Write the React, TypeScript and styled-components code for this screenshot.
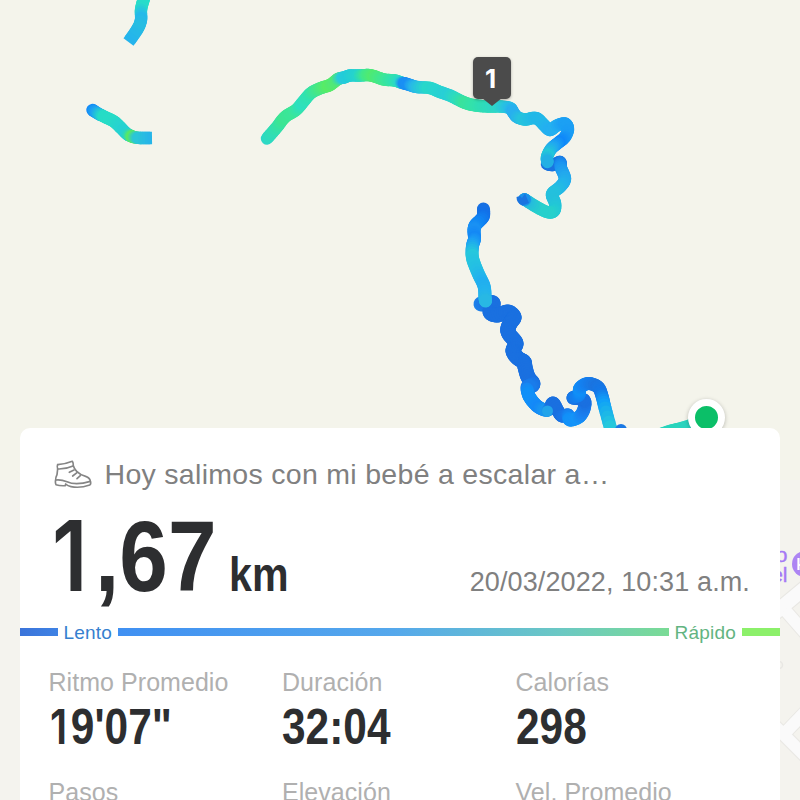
import React from "react";
import styled, { createGlobalStyle } from "styled-components";

type Point = [number, number, string?];

const startTail: Point[] = [[655, 436, "#28d4bc"], [670, 431], [682, 428], [700, 422, "#2cd2c0"]];

const northTrack: Point[] = [
  [147, -10, "#26dfc8"], [143.5, 0], [141, 10, "#29dbcb"], [141, 20, "#25b9ea"], [137.5, 29, "#27bde2"], [128.5, 42, "#25b4ec"],
];

const westTrack: Point[] = [
  [92.5, 110, "#0f82fb"], [98, 113.5, "#20a6ee"], [105, 117, "#26dcc6"], [114, 121.5, "#27dcc6"], [120, 127, "#27d6cc"],
  [127, 134, "#26d0d4"], [130, 135.5, "#30d8b8"], [133.5, 137, "#5bea5f"], [140, 138, "#2ac6d8"], [152, 138, "#26b5e8"],
];

const mainTrack: Point[] = [
  [267, 138.5, "#2cd6cc"], [277, 127, "#32dfb0"], [285, 117, "#3ce592"], [296, 110, "#3be69a"], [303, 102, "#2ee0c0"],
  [311, 93, "#30e2b0"], [321, 88, "#45e788"], [330, 85, "#58ec66"], [338, 79, "#4fe87a"], [344, 77.5, "#28cbdc"],
  [350, 75.5, "#22ccd8"], [360, 75.5, "#26d4cc"], [368, 75, "#40e88c"], [375, 76.5, "#50ea70"], [384, 79.5, "#42e88c"],
  [395, 80.5, "#32e2ac"], [401, 82.5, "#2ad8c8"], [405, 83.5, "#1a8ff2"], [410, 85, "#1a90f5"], [417, 87, "#28b8e8"],
  [430, 88, "#28d8ca"], [440, 92, "#28d4d0"], [450, 95.5, "#28cfd6"], [459, 100, "#2edcbc"], [467, 103.5, "#3ae29c"],
  [476, 105.5, "#34e2a8"], [488, 106.5, "#2edcb8"], [500, 106.5, "#2ed6c8"], [510, 108, "#28c0e4"], [513, 112, "#28b0ee"],
  [517, 117, "#28b0ee"], [525, 119.5, "#26c4dc"], [533, 118, "#24bce4"], [538, 119, "#22b8e8"], [544, 125], [550, 130, "#24b0f0"],
  [557, 125.5], [565, 123.5, "#1ca0f4"], [568, 129], [565, 137, "#1a9cf5"], [558, 143, "#0f88fa"], [551, 149, "#20a8f0"],
  [547, 157, "#24c8d8"], [547.5, 162, "#22b0e4"],
];

const descentTrack: Point[] = [
  [547, 164, "#1a74e0"], [553, 165], [560, 162, "#1a74e0"], [561, 168, "#1a90f0"], [565, 179, "#22a8ee"], [560, 187, "#22b4ea"],
  [552, 194, "#24c0de"], [555, 203, "#24c0dc"], [554, 211, "#22c8d6"], [547, 212, "#26d0cc"], [535, 206, "#26d0cc"],
  [525.5, 200, "#26bcdc"], [524.5, 199.5, "#1a90ea"],
];

const valleyTrack: Point[] = [
  [483.5, 209, "#1a70e0"], [483, 217, "#1270e8"], [475.5, 225, "#0f86f4"], [474, 231, "#1a92f4"], [474.5, 239, "#1488f5"],
  [472.5, 246, "#1ca0f4"], [472.5, 258, "#26c8dc"], [478, 273, "#24bfe4"], [484, 286, "#20aef0"], [485, 297, "#24b4ec"], [485.5, 301, "#28b8e4"],
];

const slopeTrack: Point[] = [
  [481, 304, "#1e84ec"], [493, 303, "#1a70e0"], [490, 312], [497, 315], [508, 312], [514, 317], [511, 322], [508, 328],
  [509, 334], [516, 343], [513, 350], [515, 355], [519, 359], [524, 362], [525, 367], [528, 377], [533, 384],
  [528, 387, "#1a7cea"],
];

const southTrack: Point[] = [
  [527, 389, "#1a84f0"], [529, 396, "#0f90f8"], [534, 403, "#1290f8"], [540, 408, "#1488f8"], [548, 410, "#1a98f0"],
  [553, 403, "#1a70e0"], [558, 411, "#1a70e0"], [562, 416], [568, 415, "#1a78ea"], [570, 420, "#1290f8"], [579, 417, "#1494f8"],
  [584, 409, "#1a80f0"], [584, 400, "#1a70e0"], [573, 398, "#1a70e0"], [579, 395, "#1280f0"], [580, 388, "#1090f8"],
  [588, 383.5, "#1480f0"], [598, 387, "#1a74e0"], [602, 396, "#1478e8"], [605, 408, "#10a0f8"], [611, 430, "#26c8dc"],
];

const stats = [
  { label: "Ritmo Promedio", value: "19'07\"" },
  { label: "Duración", value: "32:04" },
  { label: "Calorías", value: "298" },
  { label: "Pasos", value: "" },
  { label: "Elevación", value: "" },
  { label: "Vel. Promedio", value: "" },
];

const toRgb = (hex: string) => [1, 3, 5].map(i => parseInt(hex.slice(i, i + 2), 16));

const mix = (a: string, b: string, t: number) => {
  const to = toRgb(b);
  return `rgb(${toRgb(a).map((c, i) => Math.round(c + (to[i] - c) * t)).join(",")})`;
};

const spline = (a: number, b: number, c: number, d: number, t: number) =>
  0.5 * (2 * b + (c - a) * t + (2 * a - 5 * b + 4 * c - d) * t * t + (3 * b - a - 3 * c + d) * t * t * t);

const STEPS = 5;

// splits the track in short pieces, so that the colour follows the pace
const Track = ({ points, buttEnd, width = 12.4 }: { points: Point[]; buttEnd?: boolean; width?: number }) => {
  const colors: string[] = [];
  points.forEach((p, i) => colors.push(p[2] || colors[i - 1]));
  const at = (i: number) => points[Math.max(0, Math.min(points.length - 1, i))];
  const dots: { x: number; y: number; color: string }[] = [];

  for (let i = 0; i < points.length - 1; i++) {
    for (let s = 0; s <= STEPS; s++) {
      if (s === STEPS && i < points.length - 2) continue;
      const t = s / STEPS;
      dots.push({
        x: spline(at(i - 1)[0], at(i)[0], at(i + 1)[0], at(i + 2)[0], t),
        y: spline(at(i - 1)[1], at(i)[1], at(i + 1)[1], at(i + 2)[1], t),
        color: mix(colors[i], colors[i + 1], t),
      });
    }
  }

  return (
    <g strokeWidth={width}>
      {dots.slice(1).map((dot, idx) => {
        const butt = buttEnd && idx > dots.length - 7;
        const from = dots[butt ? idx - 1 : idx];
        return (
          <line
            key={idx}
            x1={from.x}
            y1={from.y}
            x2={dot.x}
            y2={dot.y}
            stroke={dot.color}
            strokeLinecap={butt ? "butt" : "round"}
          />
        );
      })}
    </g>
  );
};

const RouteMap = () => (
  <MapCanvas viewBox="0 0 800 800">
    <rect width="800" height="800" fill="#f4f4eb" />
    <rect y="480" width="800" height="320" fill="#f4f3ee" />
    <g fill="none" strokeLinejoin="round">
      <g stroke="#e8e7e3">
        <path d="M770 617 L806 587" strokeWidth="16" />
        <path d="M785 610 L806 634" strokeWidth="14" />
        <path d="M784 734 L806 711" strokeWidth="14" />
        <path d="M770 721 L806 757" strokeWidth="14" />
        <circle cx="779" cy="665" r="3.5" strokeWidth="1.5" />
      </g>
      <g stroke="#fafafa">
        <path d="M770 617 L806 587" strokeWidth="14" />
        <path d="M785 610 L806 634" strokeWidth="12" />
        <path d="M784 734 L806 711" strokeWidth="12" />
        <path d="M770 721 L806 757" strokeWidth="12" />
      </g>
    </g>
    <PlaceText x="787.5" y="562">o</PlaceText>
    <PlaceText x="787.5" y="582">el</PlaceText>
    <circle cx="805" cy="564" r="13" fill="#ad85f3" />
    <path d="M798.5 558 V570 M798.5 565 H808 M800 561 h3" stroke="#fff" strokeWidth="2.2" fill="none" />
    <Track points={startTail} />
    <Track points={northTrack} buttEnd />
    <Track points={westTrack} buttEnd />
    <Track points={descentTrack} />
    <path d="M516.5 197 L520 196 L522 198 L525 193.5 L529 203 L522 205.5 Q516.5 203 516.5 197Z" fill="#1a74e0" />
    <Track points={mainTrack} />
    <Track points={slopeTrack} width={15} />
    <Track points={valleyTrack} width={13} />
    <Track points={southTrack} width={13} />
    <circle cx="547.5" cy="411" r="5.5" fill="#22a4ea" />
    <circle cx="621" cy="430" r="6" fill="#1a78e4" />
  </MapCanvas>
);

const BootIcon = () => (
  <svg width="38" height="29" viewBox="-3 -3 114 87" fill="none" stroke="#858585" strokeWidth="5" strokeLinecap="round" strokeLinejoin="round">
    <path d="M8 11 Q30 10 52 1 Q55 5 55 14 Q58 24 65 31 Q76 42 92 46 Q105 50 106 61" />
    <path d="M8 11 Q5 15 8 24 L6 41 Q1 51 2 57" />
    <path d="M8 24 Q32 25 54 15" />
    <path d="M2 57 Q18 55 36 62 Q62 74 106 61 Q109 69 104 72 Q76 82 48 77 Q38 75 32 69 L31 74 Q14 75 3 71 Q0 65 2 57Z" />
    <path d="M43 34 L57 27 M53 45 L66 35 M66 53 L76 44" />
  </svg>
);

const Figures = ({ value }: { value: string }) => (
  <>{value.split("").map((char, idx) => (char === "1" ? <One key={idx}>1</One> : char))}</>
);

const App = () => {
  return (
    <Screen>
      <GlobalStyle />
      <RouteMap />
      <StartDot />
      <KmMarker>1</KmMarker>
      <Card>
        <Title><BootIcon /><span>Hoy salimos con mi bebé a escalar a…</span></Title>
        <Summary>
          <Distance><Figures value="1,67" /></Distance>
          <Unit>km</Unit>
          <DateText>20/03/2022, 10:31 a.m.</DateText>
        </Summary>
        <Pace>
          <PaceBar $width={38} $fill="linear-gradient(90deg, #3b74da, #3f82e4)" />
          <PaceLabel $color="#3580cf">Lento</PaceLabel>
          <PaceBar $fill="linear-gradient(90deg, #4090f2, #55a8ec 50%, #6bc8c4 80%, #7adb95)" />
          <PaceLabel $color="#62b481">Rápido</PaceLabel>
          <PaceBar $width={38} $fill="#8cf06a" />
        </Pace>
        <Stats>
          {stats.map(item => (
            <div key={item.label}>
              <StatLabel>{item.label}</StatLabel>
              <StatValue><Figures value={item.value} /></StatValue>
            </div>
          ))}
        </Stats>
      </Card>
    </Screen>
  );
};

const GlobalStyle = createGlobalStyle`
  body {
    margin: 0;
    overflow: hidden;
    font-family: "Liberation Sans", Arial, sans-serif;
  }
`;

const Screen = styled.div`
  position: relative;
  box-sizing: border-box;
  width: 800px;
  height: 800px;
  padding: 428px 20px 0;
  overflow: hidden;
`;

const MapCanvas = styled.svg`
  position: absolute;
  top: 0;
  left: 0;
  width: 800px;
  height: 800px;
`;

const PlaceText = styled.text`
  font-size: 21px;
  fill: #a679f5;
  stroke: #a679f5;
  stroke-width: 0.4px;
  text-anchor: end;
`;

const StartDot = styled.div`
  position: absolute;
  top: 399px;
  left: 688px;
  box-sizing: border-box;
  width: 37px;
  height: 37px;
  border: 7px solid #fff;
  border-radius: 50%;
  background: #0bbf68;
  box-shadow: 0 1px 4px rgba(0, 0, 0, 0.25);
`;

const KmMarker = styled.div`
  position: absolute;
  top: 57px;
  left: 473px;
  width: 38px;
  height: 42px;
  border-radius: 5px;
  background: #4b4b4b;
  box-shadow: 0 1px 3px rgba(0, 0, 0, 0.3);
  color: #fff;
  font: 700 26px/43px Inter, sans-serif;
  text-align: center;
  text-indent: -3px;

  &::after {
    content: "";
    position: absolute;
    top: 41px;
    left: 9px;
    border: 10px solid transparent;
    border-top: 8px solid #4b4b4b;
    border-bottom: 0;
  }
`;

const Card = styled.div`
  position: relative;
  height: 400px;
  padding-top: 28px;
  border-radius: 10px 10px 0 0;
  background: #fff;
`;

const Title = styled.div`
  display: flex;
  align-items: center;
  gap: 12.5px;
  height: 36px;
  padding-left: 34px;
  color: #808080;
  font-size: 28.5px;
  line-height: 38px;
  letter-spacing: 0.3px;
  white-space: nowrap;
`;

const Summary = styled.div`
  display: flex;
  align-items: baseline;
  height: 110px;
  margin-top: 9px;
  padding: 0 30px 0 30px;
  white-space: nowrap;
`;

// Helvetica-like figures, but the "1" has no foot
const One = styled.span`
  display: inline-block;
  width: 0.512em;
  padding-left: 0.025em;
  font-family: Inter, sans-serif;
  font-size: 0.96em;
  font-weight: 600;
  line-height: 1;
`;

const Distance = styled.div`
  width: 179px;
  color: #2d2e30;
  font-size: 101px;
  font-weight: 700;
  line-height: 111px;
  transform: scaleX(0.865);
  transform-origin: left;
`;

const Unit = styled.div`
  width: 100px;
  color: #2d2e30;
  font-size: 49px;
  font-weight: 700;
  transform: scaleX(0.84);
  transform-origin: left;
`;

const DateText = styled.div`
  margin-left: auto;
  color: #808080;
  font-size: 27px;
  letter-spacing: 0.12px;
`;

const Pace = styled.div`
  display: flex;
  align-items: center;
  height: 24px;
  margin-top: 9px;
`;

const PaceBar = styled.div<{ $width?: number; $fill: string }>`
  flex: ${({ $width }) => ($width ? `0 0 ${$width}px` : "1")};
  height: 8px;
  background: ${({ $fill }) => $fill};
`;

const PaceLabel = styled.div<{ $color: string }>`
  padding: 0 6px 0 5.5px;
  color: ${({ $color }) => $color};
  font-size: 19px;
  line-height: 25px;
  letter-spacing: 0.2px;
`;

const Stats = styled.div`
  display: grid;
  grid-template-columns: repeat(3, 233.5px);
  grid-auto-rows: 87px;
  row-gap: 23.7px;
  margin-top: 22.5px;
  padding-left: 28.5px;
  white-space: nowrap;
`;

const StatLabel = styled.div`
  color: #b0b0b0;
  font-size: 25px;
  line-height: 30px;
  letter-spacing: 0.05px;
`;

const StatValue = styled.div`
  height: 54px;
  margin-top: 3px;
  color: #2d2e30;
  font-size: 50.5px;
  font-weight: 700;
  line-height: 54px;
  transform: scaleX(0.84);
  transform-origin: left;
`;

export default App;
